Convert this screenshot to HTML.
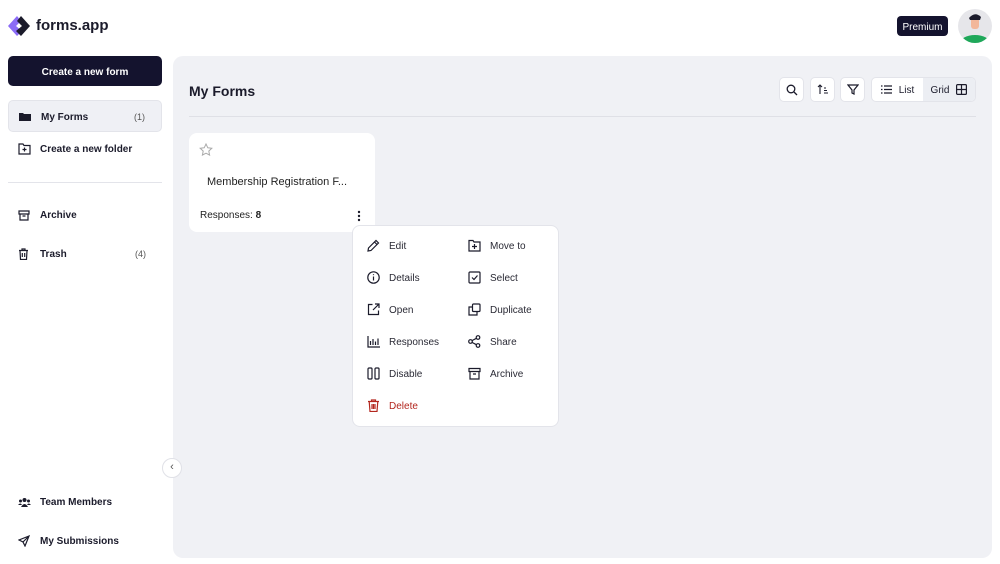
<!DOCTYPE html>
<html><head><meta charset="utf-8"><style>
*{box-sizing:border-box;margin:0;padding:0}
body{width:1000px;height:564px;background:#fff;font-family:"Liberation Sans",sans-serif;color:#1b1b2b;position:relative;overflow:hidden;line-height:1.2}
.a{position:absolute}
.nav{position:absolute;left:8px;width:154px;height:32px;display:flex;align-items:center;font-size:10px;font-weight:bold;color:#1b1b2b}
.nav svg{position:absolute;left:10px}
.nav span.t{position:absolute;left:32px;top:11px}
.nav span.c{position:absolute;right:16px;top:11px;font-weight:normal;font-size:9px;color:#555}
.tb{position:absolute;top:77px;height:25px;background:#fff;border:1px solid #e3e4ea;border-radius:5px;display:flex;align-items:center;justify-content:center}
.mi{position:absolute;font-size:10px;color:#2a2a35;display:flex;align-items:center;line-height:13px}
.mi svg{margin-right:9px}
.mi span{position:relative;top:1px}
</style></head><body>
<svg class="a" style="left:7px;top:15px" width="24" height="22" viewBox="0 0 24 22"><path d="M10 1 L1 11 L10 21 L15 16 L9 11 L14 6Z" fill="#8b6cf6"/><path d="M14 1 L23 11 L14 21 L9 16 L15 11 L10 6Z" fill="#1b1b2b"/></svg>
<div class="a" style="left:36px;top:17px;font-size:15px;font-weight:bold;color:#1b1b2b">forms.app</div>
<div class="a" style="left:897px;top:16px;width:51px;height:20px;background:#14132e;color:#fff;border-radius:4px;font-size:10px;text-align:center;line-height:20px;padding-top:2px">Premium</div>
<svg class="a" style="left:958px;top:9px" width="34" height="34" viewBox="0 0 34 34"><circle cx="17" cy="17" r="17" fill="#e6e6ea"/><clipPath id="cc"><circle cx="17" cy="17" r="17"/></clipPath><g clip-path="url(#cc)"><ellipse cx="17" cy="34" rx="15" ry="8" fill="#1fa85a"/><rect x="13" y="8" width="8" height="12" rx="3" fill="#f2b79a"/><path d="M11 9 Q17 2 23 8 L22 11 L12 11Z" fill="#1b1b2b"/></g></svg>

<div class="a" style="left:8px;top:56px;width:154px;height:30px;background:#14132e;border-radius:5px;color:#fff;font-size:10px;font-weight:bold;text-align:center;line-height:30px;padding-top:2px">Create a new form</div>
<div class="nav" style="top:100px;background:#eff0f5;border:1px solid #e3e4ea;border-radius:5px"><svg width="12" height="10" viewBox="0 0 12 10"><path d="M0 2h4l1 1h7v7H0z" fill="#1b1b2b"/></svg><span class="t" style="top:11px">My Forms</span><span class="c" style="top:11px">(1)</span></div>
<div class="nav" style="top:133px"><svg width="13" height="12" viewBox="0 0 13 12" fill="none" stroke="#1b1b2b" stroke-width="1.2"><path d="M1 1h4l1 1.5h6V11H1z M6.5 4.5v4 M4.5 6.5h4"/></svg><span class="t">Create a new folder</span></div>
<div class="a" style="left:8px;top:182px;width:154px;height:1px;background:#e3e4ea"></div>
<div class="nav" style="top:199px"><svg width="12" height="11" viewBox="0 0 12 11" fill="none" stroke="#1b1b2b" stroke-width="1.2"><path d="M1 1h10v3H1z M2 4v6h8V4 M4.5 6h3"/></svg><span class="t">Archive</span></div>
<div class="nav" style="top:238px"><svg width="11" height="12" viewBox="0 0 11 12" fill="none" stroke="#1b1b2b" stroke-width="1.2"><path d="M1 2.5h9 M4 2.5V1h3v1.5 M2 2.5l.5 9h6l.5-9 M4.3 5v4 M6.7 5v4"/></svg><span class="t">Trash</span><span class="c">(4)</span></div>
<div class="nav" style="top:486px"><svg width="13" height="11" viewBox="0 0 13 11" fill="#1b1b2b"><circle cx="6.5" cy="3" r="2"/><circle cx="2.5" cy="4" r="1.5"/><circle cx="10.5" cy="4" r="1.5"/><path d="M3 10q3.5-6 7 0z M0 8q2.5-3 4 0z M9 8q1.5-3 4 0z"/></svg><span class="t">Team Members</span></div>
<div class="nav" style="top:525px"><svg width="12" height="12" viewBox="0 0 12 12" fill="none" stroke="#1b1b2b" stroke-width="1.2"><path d="M11 1L1 5l4 2 2 4z M5 7l6-6"/></svg><span class="t">My Submissions</span></div>

<div class="a" style="left:173px;top:56px;width:819px;height:502px;background:#f0f1f5;border-radius:10px"></div>
<div class="a" style="left:162px;top:458px;width:20px;height:20px;border-radius:50%;background:#fff;border:1px solid #e0e1e7;font-size:11px;color:#555;text-align:center;line-height:17px">‹</div>
<div class="a" style="left:189px;top:83px;font-size:14px;font-weight:bold">My Forms</div>
<div class="tb" style="left:779px;width:25px"><svg width="12" height="12" viewBox="0 0 12 12" fill="none" stroke="#1b1b2b" stroke-width="1.3"><circle cx="5" cy="5" r="3.8"/><path d="M8 8l3 3"/></svg></div>
<div class="tb" style="left:810px;width:25px"><svg width="12" height="11" viewBox="0 0 12 11" fill="none" stroke="#1b1b2b" stroke-width="1.1"><path d="M3 10V1 M1 3l2-2 2 2 M7 4h2 M7 6.5h3 M7 9h4"/></svg></div>
<div class="tb" style="left:840px;width:25px"><svg width="12" height="11" viewBox="0 0 12 11" fill="none" stroke="#1b1b2b" stroke-width="1.2"><path d="M1 1h10L7 6v4L5 9V6z"/></svg></div>
<div class="tb" style="left:871px;width:105px;justify-content:flex-start;overflow:hidden;line-height:12px"><div style="width:52px;height:100%;display:flex;align-items:center;justify-content:center;font-size:10px;gap:7px"><svg width="11" height="9" viewBox="0 0 11 9" stroke="#1b1b2b" stroke-width="1.2"><path d="M0 1h1.5M3 1h8M0 4.5h1.5M3 4.5h8M0 8h1.5M3 8h8"/></svg><span style="position:relative;top:1px">List</span></div><div style="width:53px;height:100%;background:#eceef3;display:flex;align-items:center;justify-content:center;font-size:10px;gap:7px"><span style="position:relative;top:1px">Grid</span><svg width="11" height="11" viewBox="0 0 11 11" fill="none" stroke="#1b1b2b" stroke-width="1.2"><rect x=".6" y=".6" width="9.8" height="9.8" rx="1"/><path d="M5.5 .6v9.8M.6 5.5h9.8"/></svg></div></div>
<div class="a" style="left:189px;top:116px;width:787px;height:1px;background:#dfe0e6"></div>

<div class="a" style="left:189px;top:133px;width:186px;height:99px;background:#fff;border-radius:8px"></div>
<svg class="a" style="left:199px;top:143px" width="14" height="13" viewBox="0 0 14 13" fill="none" stroke="#aaa" stroke-width="1"><path d="M7 1l1.8 3.8 4 .5-3 2.8.8 4L7 10.2 3.4 12.1l.8-4-3-2.8 4-.5z"/></svg>
<div class="a" style="left:207px;top:176px;font-size:11px;color:#222">Membership Registration F...</div>
<div class="a" style="left:200px;top:210px;font-size:10px;color:#222">Responses: <b>8</b></div>
<svg class="a" style="left:357px;top:210px" width="4" height="12" viewBox="0 0 4 12" fill="#1b1b2b"><circle cx="2" cy="2" r="1.2"/><circle cx="2" cy="6" r="1.2"/><circle cx="2" cy="10" r="1.2"/></svg>

<div class="a" style="left:352px;top:225px;width:207px;height:202px;background:#fff;border:1px solid #e3e4ea;border-radius:8px"></div>
<div class="mi" style="left:367px;top:239px"><svg width="13" height="13" viewBox="0 0 13 13" fill="none" stroke="#1b1b2b" stroke-width="1.2"><path d="M1 12l.5-3L9 1.5l2.5 2.5L4 11.5z M7.5 3l2.5 2.5"/></svg><span>Edit</span></div>
<div class="mi" style="left:367px;top:271px"><svg width="13" height="13" viewBox="0 0 13 13" fill="none" stroke="#1b1b2b" stroke-width="1.2"><circle cx="6.5" cy="6.5" r="5.7"/><path d="M6.5 5.5v4M6.5 3.3v.8"/></svg><span>Details</span></div>
<div class="mi" style="left:367px;top:303px"><svg width="13" height="13" viewBox="0 0 13 13" fill="none" stroke="#1b1b2b" stroke-width="1.2"><path d="M5.5 1.5h-4v10h10v-4 M8 1h4v4 M12 1L6 7"/></svg><span>Open</span></div>
<div class="mi" style="left:367px;top:335px"><svg width="13" height="13" viewBox="0 0 13 13" fill="none" stroke="#1b1b2b" stroke-width="1.2"><path d="M1 1v11h12 M3.5 10V6 M6 10V4 M8.5 10V6.5 M11 10V3.5"/></svg><span>Responses</span></div>
<div class="mi" style="left:367px;top:367px"><svg width="13" height="13" viewBox="0 0 13 13" fill="none" stroke="#1b1b2b" stroke-width="1.2"><rect x="1" y="1" width="4" height="11" rx="1"/><rect x="8" y="1" width="4" height="11" rx="1"/></svg><span>Disable</span></div>
<div class="mi" style="left:367px;top:399px;color:#b3261e"><svg width="13" height="13" viewBox="0 0 13 13" fill="none" stroke="#b3261e" stroke-width="1.2"><path d="M1 2.5h11 M4.5 2.5V1h4v1.5 M2.2 2.5l.8 10h7l.8-10 M5 5v5M6.5 5v5M8 5v5"/></svg><span>Delete</span></div>
<div class="mi" style="left:468px;top:239px"><svg width="13" height="13" viewBox="0 0 13 13" fill="none" stroke="#1b1b2b" stroke-width="1.2"><path d="M1 1.5h4l1 1.5h6V12H1z M6.5 5v5 M4 7.5h5"/></svg><span>Move to</span></div>
<div class="mi" style="left:468px;top:271px"><svg width="13" height="13" viewBox="0 0 13 13" fill="none" stroke="#1b1b2b" stroke-width="1.2"><rect x="1" y="1" width="11" height="11" rx="1"/><path d="M4 6.5l2 2 3.5-4"/></svg><span>Select</span></div>
<div class="mi" style="left:468px;top:303px"><svg width="13" height="13" viewBox="0 0 13 13" fill="none" stroke="#1b1b2b" stroke-width="1.2"><rect x="4.5" y="1" width="7.5" height="7.5" rx="1"/><path d="M4.5 4H1v8h8V8.5"/></svg><span>Duplicate</span></div>
<div class="mi" style="left:468px;top:335px"><svg width="13" height="13" viewBox="0 0 13 13" fill="none" stroke="#1b1b2b" stroke-width="1.2"><circle cx="10" cy="2.5" r="1.8"/><circle cx="2.5" cy="6.5" r="1.8"/><circle cx="10" cy="10.5" r="1.8"/><path d="M4 5.6l4.4-2.3M4 7.4l4.4 2.3"/></svg><span>Share</span></div>
<div class="mi" style="left:468px;top:367px"><svg width="13" height="13" viewBox="0 0 13 13" fill="none" stroke="#1b1b2b" stroke-width="1.2"><path d="M1 1.5h11v3H1z M2 4.5V12h9V4.5 M5 7h3"/></svg><span>Archive</span></div>
</body></html>
